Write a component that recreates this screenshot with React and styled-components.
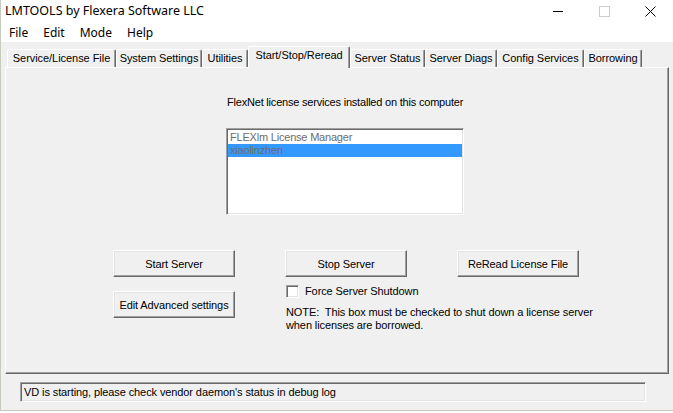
import React, { useState } from "react";
import styled, { createGlobalStyle } from "styled-components";

const GlobalStyle = createGlobalStyle`
	html, body {
		margin: 0;
		padding: 0;
		background: #ffffff;
	}
	* {
		box-sizing: border-box;
	}
`;

const Window = styled.div`
	width: 673px;
	height: 411px;
	display: flex;
	flex-direction: column;
	background: #f0f0f0;
	border-left: 1px solid #c5cdbd;
	border-bottom: 1px solid #c5cdbd;
	font-family: "Liberation Sans", Arial, sans-serif;
	font-size: 11px;
	color: #000;
	overflow: hidden;
`;

const TitleBar = styled.div`
	height: 22px;
	display: flex;
	align-items: center;
	background: #fff;
	font-family: "Noto Sans", "Liberation Sans", sans-serif;
	font-size: 12.5px;
`;

const Title = styled.div`
	flex: 1;
	padding-left: 4px;
	line-height: 22px;
`;

const CaptionButton = styled.div`
	width: 46px;
	height: 22px;
	display: flex;
	align-items: center;
	justify-content: center;
`;

const MenuBar = styled.div`
	height: 20px;
	display: flex;
	align-items: center;
	gap: 15px;
	padding: 2px 0 0 8px;
	background: #fff;
	font-family: "Noto Sans", "Liberation Sans", sans-serif;
	font-size: 12px;
	line-height: 18px;
`;

const MenuItem = styled.span``;

const Body = styled.div`
	flex: 1;
	display: flex;
	flex-direction: column;
	padding: 4px 4px 0 4px;
`;

const TabStrip = styled.div`
	display: flex;
	align-items: flex-end;
	padding-left: 2px;
	height: 21px;
`;

const Tab = styled.div`
	position: relative;
	width: ${(p) => p.$w}px;
	height: ${(p) => (p.$active ? 22 : 18)}px;
	margin-bottom: ${(p) => (p.$active ? -1 : 0)}px;
	z-index: ${(p) => (p.$active ? 2 : 1)};
	display: flex;
	align-items: ${(p) => (p.$active ? "flex-start" : "center")};
	padding-top: ${(p) => (p.$active ? 2 : 0)}px;
	padding-bottom: ${(p) => (p.$active ? 0 : 1)}px;
	justify-content: center;
	background: #f0f0f0;
	border-top: 1px solid #fff;
	border-left: 1px solid #fff;
	border-right: 1px solid #696969;
	box-shadow: inset -1px 0 0 #a0a0a0;
	border-radius: 2px 2px 0 0;
	letter-spacing: -0.05px;
	white-space: nowrap;
	cursor: default;
`;

const Panel = styled.div`
	height: 307px;
	display: flex;
	flex-direction: column;
	border-top: 1px solid #fff;
	border-left: 1px solid #fff;
	border-right: 1px solid #696969;
	border-bottom: 1px solid #696969;
	box-shadow: inset -1px -1px 0 #a0a0a0;
	padding: 28px 0 0 107px;
`;

const ListArea = styled.div`
	margin-left: 113px;
	width: 238px;
	display: flex;
	flex-direction: column;
`;

const Caption = styled.div`
	padding-left: 1px;
	line-height: 13px;
	letter-spacing: -0.2px;
	white-space: nowrap;
`;

const ListBox = styled.div`
	margin-top: 19px;
	height: 87px;
	background: #fff;
	border-top: 1px solid #a0a0a0;
	border-left: 1px solid #a0a0a0;
	border-right: 1px solid #fff;
	border-bottom: 1px solid #fff;
	box-shadow: inset 1px 1px 0 #696969, inset -1px -1px 0 #e3e3e3;
	padding: 2px 1px;
`;

const ListItem = styled.div`
	height: 13px;
	line-height: 13px;
	padding-left: 2px;
	color: #6d6d6d;
	background: ${(p) => (p.$selected ? "#3399ff" : "transparent")};
	letter-spacing: -0.2px;
	white-space: nowrap;
`;

const Controls = styled.div`
	margin-top: 35px;
	display: grid;
	grid-template-columns: 122px 122px 122px;
	column-gap: 50px;
	row-gap: 8px;
	align-items: start;
`;

const Button = styled.button`
	height: 27px;
	width: 122px;
	margin-top: ${(p) => p.$offset || 0}px;
	padding: 0;
	background: #f0f0f0;
	font-family: "Liberation Sans", Arial, sans-serif;
	font-size: 11px;
	letter-spacing: -0.1px;
	color: #000;
	border-top: 1px solid #fff;
	border-left: 1px solid #fff;
	border-right: 1px solid #696969;
	border-bottom: 1px solid #696969;
	box-shadow: inset -1px -1px 0 #a0a0a0, inset 1px 1px 0 #e3e3e3;
	white-space: nowrap;
	cursor: default;
`;

const NoteArea = styled.div`
	grid-column: 2 / span 2;
	display: flex;
	flex-direction: column;
	margin-left: 1px;
`;

const CheckRow = styled.label`
	display: flex;
	align-items: center;
	gap: 6px;
	height: 13px;
	line-height: 13px;
	letter-spacing: -0.1px;
`;

const CheckBox = styled.span`
	width: 13px;
	height: 13px;
	background: #fff;
	border-top: 1px solid #a0a0a0;
	border-left: 1px solid #a0a0a0;
	border-right: 1px solid #fff;
	border-bottom: 1px solid #fff;
	box-shadow: inset 1px 1px 0 #696969, inset -1px -1px 0 #e3e3e3;
	display: flex;
	align-items: center;
	justify-content: center;
`;

const Note = styled.div`
	margin-top: 8px;
	line-height: 13px;
	letter-spacing: -0.1px;
	white-space: pre;
`;

const StatusBar = styled.div`
	margin: 8px 0 0 15px;
	width: 626px;
	height: 20px;
	line-height: 18px;
	padding-left: 3px;
	border-top: 1px solid #a0a0a0;
	border-left: 1px solid #a0a0a0;
	border-right: 1px solid #fff;
	border-bottom: 1px solid #fff;
	box-shadow: inset 1px 1px 0 #696969, inset -1px -1px 0 #e3e3e3;
	letter-spacing: -0.1px;
	white-space: nowrap;
`;

const tabs = [
	{ label: "Service/License File", w: 109 },
	{ label: "System Settings", w: 86 },
	{ label: "Utilities", w: 46 },
	{ label: "Start/Stop/Reread", w: 102 },
	{ label: "Server Status", w: 75 },
	{ label: "Server Diags", w: 72 },
	{ label: "Config Services", w: 87 },
	{ label: "Borrowing", w: 58 },
];

const App = () => {
	const [active, setActive] = useState(3);
	const [force, setForce] = useState(false);

	return (
		<Window>
			<GlobalStyle />
			<TitleBar>
				<Title>LMTOOLS by Flexera Software LLC</Title>
				<CaptionButton>
					<svg width="10" height="10" viewBox="0 0 10 10">
						<line x1="0" y1="5.5" x2="10" y2="5.5" stroke="#000" strokeWidth="1" />
					</svg>
				</CaptionButton>
				<CaptionButton>
					<svg width="11" height="11" viewBox="0 0 11 11">
						<rect x="0.5" y="0.5" width="10" height="10" fill="none" stroke="#cccccc" strokeWidth="1" />
					</svg>
				</CaptionButton>
				<CaptionButton>
					<svg width="11" height="11" viewBox="0 0 11 11">
						<path d="M0.5 0.5 L10.5 10.5 M10.5 0.5 L0.5 10.5" stroke="#000" strokeWidth="1" fill="none" />
					</svg>
				</CaptionButton>
			</TitleBar>
			<MenuBar>
				<MenuItem>File</MenuItem>
				<MenuItem>Edit</MenuItem>
				<MenuItem>Mode</MenuItem>
				<MenuItem>Help</MenuItem>
			</MenuBar>
			<Body>
				<TabStrip>
					{tabs.map((t, i) => (
						<Tab key={t.label} $w={t.w} $active={i === active} onClick={() => setActive(i)}>
							{t.label}
						</Tab>
					))}
				</TabStrip>
				<Panel>
					<ListArea>
						<Caption>FlexNet license services installed on this computer</Caption>
						<ListBox>
							<ListItem>FLEXlm License Manager</ListItem>
							<ListItem $selected>xiaolinzhen</ListItem>
						</ListBox>
					</ListArea>
					<Controls>
						<Button>Start Server</Button>
						<Button>Stop Server</Button>
						<Button>ReRead License File</Button>
						<Button $offset={6}>Edit Advanced settings</Button>
						<NoteArea>
							<CheckRow onClick={() => setForce(!force)}>
								<CheckBox>
									{force && (
										<svg width="7" height="7" viewBox="0 0 7 7">
											<path d="M0 3 L2.5 5.5 L7 1" stroke="#000" strokeWidth="1.5" fill="none" />
										</svg>
									)}
								</CheckBox>
								Force Server Shutdown
							</CheckRow>
							<Note>
								{"NOTE:  This box must be checked to shut down a license server\nwhen licenses are borrowed."}
							</Note>
						</NoteArea>
					</Controls>
				</Panel>
				<StatusBar>VD is starting, please check vendor daemon's status in debug log</StatusBar>
			</Body>
		</Window>
	);
};

export default App;
